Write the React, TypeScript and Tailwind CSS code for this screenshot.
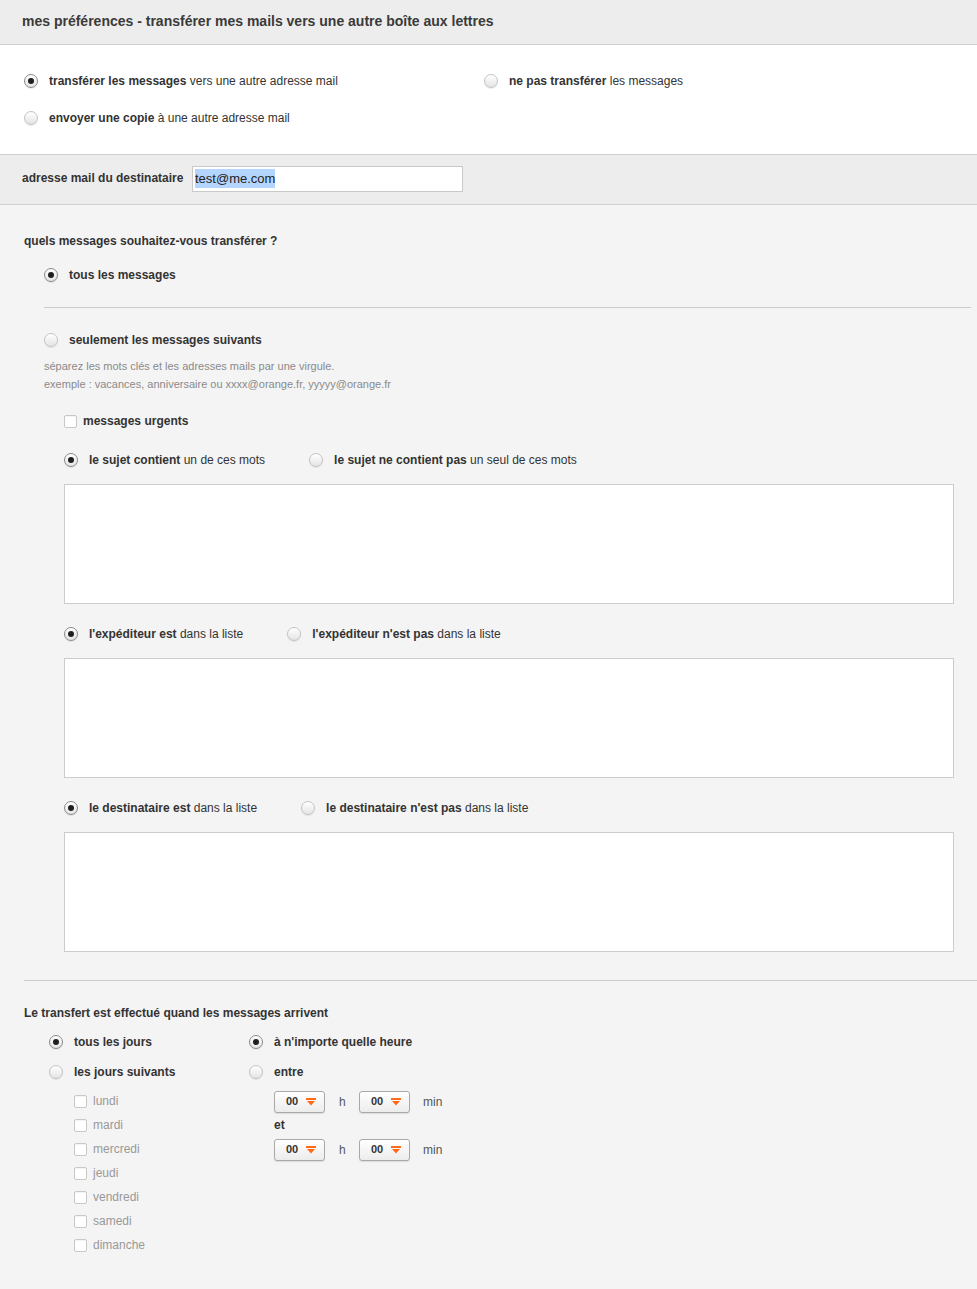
import React from "react";

function Radio({ checked = false }: { checked?: boolean }) {
  return (
    <span
      className={`flex h-[14px] w-[14px] shrink-0 items-center justify-center rounded-full border bg-gradient-to-b from-white to-[#e4e4e4] shadow-[0_1px_1px_rgba(0,0,0,0.08)] ${
        checked ? "border-[#8a8a8a]" : "border-[#c4c4c4]"
      }`}
    >
      {checked && <span className="h-[6px] w-[6px] rounded-full bg-[#1f1f1f]" />}
    </span>
  );
}

function Checkbox() {
  return (
    <span className="h-[13px] w-[13px] shrink-0 rounded-[2px] border border-[#c8c8c8] bg-white shadow-[inset_0_1px_1px_rgba(0,0,0,0.05)]" />
  );
}

function RadioLabel({
  checked,
  children,
}: {
  checked?: boolean;
  children: React.ReactNode;
}) {
  return (
    <label className="flex items-center gap-[11px]">
      <Radio checked={checked} />
      <span>{children}</span>
    </label>
  );
}

function TimeSelect() {
  return (
    <div className="flex h-[22px] w-[51px] items-center rounded-[3px] border border-[#a9a9a9] bg-gradient-to-b from-white to-[#ececec] pl-[11px] shadow-[0_1px_1px_rgba(0,0,0,0.1)]">
      <span className="text-[11px] font-bold text-[#333]">00</span>
      <svg width="10" height="8" viewBox="0 0 10 8" className="ml-[8px]">
        <rect x="0" y="0" width="10" height="2" fill="#ff6a1a" />
        <polygon points="1,3 9,3 5,7.5" fill="#ff6a1a" />
      </svg>
    </div>
  );
}

const days = ["lundi", "mardi", "mercredi", "jeudi", "vendredi", "samedi", "dimanche"];

export default function App() {
  return (
    <div className="min-h-[1289px] bg-[#f4f4f4] font-['Liberation_Sans',Arial,sans-serif] text-[12px] text-[#333]">
      {/* Header */}
      <div className="flex h-[45px] items-center border-b border-[#cfcfcf] bg-[#ededed] pl-[22px]">
        <h1 className="-mt-[1px] text-[14px] font-bold text-[#3a3a3a]">
          mes préférences - transférer mes mails vers une autre boîte aux lettres
        </h1>
      </div>

      {/* Transfer mode */}
      <div className="border-b border-[#cfcfcf] bg-white pb-[26px] pl-[24px] pt-[26px]">
        <div className="flex h-[20px] items-center">
          <div className="w-[460px]">
            <RadioLabel checked>
              <b>transférer les messages</b> vers une autre adresse mail
            </RadioLabel>
          </div>
          <RadioLabel>
            <b>ne pas transférer</b> les messages
          </RadioLabel>
        </div>
        <div className="mt-[17px] flex h-[20px] items-center">
          <RadioLabel>
            <b>envoyer une copie</b> à une autre adresse mail
          </RadioLabel>
        </div>
      </div>

      {/* Recipient */}
      <div className="flex h-[50px] items-center border-b border-[#cfcfcf] bg-[#ededed] pl-[22px]">
        <span className="-mt-[3px] w-[170px] font-bold">adresse mail du destinataire</span>
        <div className="-mt-[2px] flex h-[26px] w-[271px] items-center border border-[#c9c9c9] bg-white pl-[2px] text-[13px] text-[#222]">
          <span className="bg-[#b4d5fe]">test@me.com</span>
        </div>
      </div>

      {/* Which messages */}
      <div className="pb-[32px] pt-[26px]">
        <div className="flex h-[20px] items-center pl-[24px] font-bold">
          quels messages souhaitez-vous transférer ?
        </div>

        <div className="mt-[14px] flex h-[20px] items-center pl-[44px] font-bold">
          <RadioLabel checked>tous les messages</RadioLabel>
        </div>

        <div className="ml-[44px] mr-[6px] mt-[22px] h-px bg-[#cccccc]" />

        <div className="mt-[22px] flex h-[20px] items-center pl-[44px] font-bold">
          <RadioLabel>seulement les messages suivants</RadioLabel>
        </div>

        <div className="mt-[7px] pl-[44px] text-[11px] leading-[18px] text-[#8a8a8a]">
          <p>séparez les mots clés et les adresses mails par une virgule.</p>
          <p>exemple : vacances, anniversaire ou xxxx@orange.fr, yyyyy@orange.fr</p>
        </div>

        <label className="mt-[18px] flex h-[20px] items-center gap-[6px] pl-[64px] font-bold">
          <Checkbox />
          <span>messages urgents</span>
        </label>

        <div className="mt-[19px] flex h-[20px] items-center pl-[64px]">
          <RadioLabel checked>
            <b>le sujet contient</b> un de ces mots
          </RadioLabel>
          <div className="ml-[44px]">
            <RadioLabel>
              <b>le sujet ne contient pas</b> un seul de ces mots
            </RadioLabel>
          </div>
        </div>
        <div className="ml-[64px] mr-[23px] mt-[14px] h-[120px] border border-[#cccccc] bg-white" />

        <div className="mt-[20px] flex h-[20px] items-center pl-[64px]">
          <RadioLabel checked>
            <b>l'expéditeur est</b> dans la liste
          </RadioLabel>
          <div className="ml-[44px]">
            <RadioLabel>
              <b>l'expéditeur n'est pas</b> dans la liste
            </RadioLabel>
          </div>
        </div>
        <div className="ml-[64px] mr-[23px] mt-[14px] h-[120px] border border-[#cccccc] bg-white" />

        <div className="mt-[20px] flex h-[20px] items-center pl-[64px]">
          <RadioLabel checked>
            <b>le destinataire est</b> dans la liste
          </RadioLabel>
          <div className="ml-[44px]">
            <RadioLabel>
              <b>le destinataire n'est pas</b> dans la liste
            </RadioLabel>
          </div>
        </div>
        <div className="ml-[64px] mr-[23px] mt-[14px] h-[120px] border border-[#cccccc] bg-white" />

        <div className="ml-[24px] mt-[28px] h-px bg-[#cccccc]" />

        {/* Schedule */}
        <div className="mt-[22px] flex h-[20px] items-center pl-[24px] font-bold">
          Le transfert est effectué quand les messages arrivent
        </div>

        <div className="mt-[4px] flex pl-[49px]">
          <div className="w-[200px]">
            <div className="flex h-[30px] items-center font-bold">
              <RadioLabel checked>tous les jours</RadioLabel>
            </div>
            <div className="flex h-[30px] items-center font-bold">
              <RadioLabel>les jours suivants</RadioLabel>
            </div>
            <div className="mt-[2px] pl-[25px]">
              {days.map((d) => (
                <label key={d} className="flex h-[24px] items-center gap-[6px] text-[#999]">
                  <Checkbox />
                  <span>{d}</span>
                </label>
              ))}
            </div>
          </div>

          <div>
            <div className="flex h-[30px] items-center font-bold">
              <RadioLabel checked>à n'importe quelle heure</RadioLabel>
            </div>
            <div className="flex h-[30px] items-center font-bold">
              <RadioLabel>entre</RadioLabel>
            </div>
            <div className="mt-[2px] pl-[25px]">
              <div className="flex h-[24px] items-center pt-[1px]">
                <TimeSelect />
                <span className="ml-[14px] w-[20px] text-[#555]">h</span>
                <TimeSelect />
                <span className="ml-[13px] text-[#555]">min</span>
              </div>
              <div className="flex h-[24px] items-center font-bold">et</div>
              <div className="flex h-[24px] items-center pt-[1px]">
                <TimeSelect />
                <span className="ml-[14px] w-[20px] text-[#555]">h</span>
                <TimeSelect />
                <span className="ml-[13px] text-[#555]">min</span>
              </div>
            </div>
          </div>
        </div>
      </div>
    </div>
  );
}
